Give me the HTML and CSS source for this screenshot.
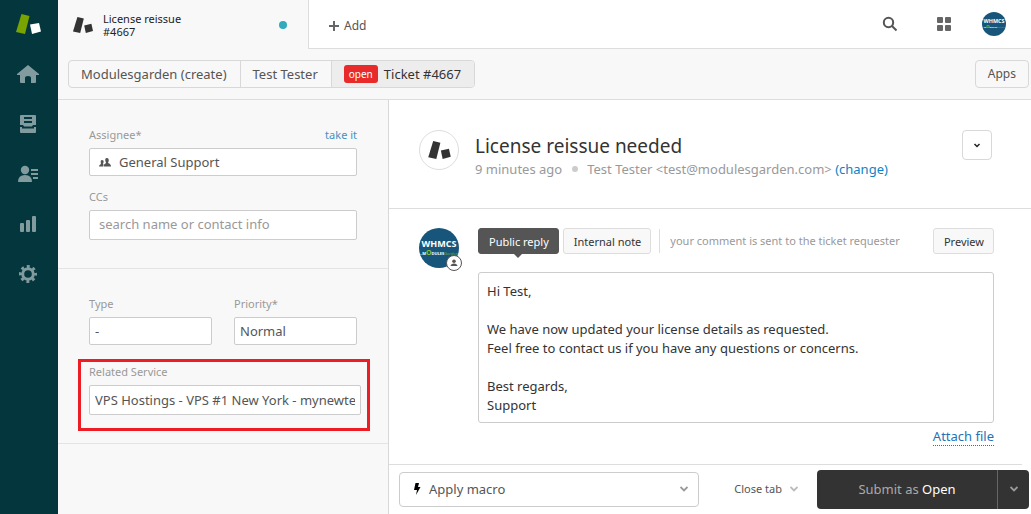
FILE: index.html
```html
<!DOCTYPE html>
<html lang="en">
<head>
<meta charset="utf-8">
<title>License reissue #4667</title>
<link rel="stylesheet" href="styles.css">
</head>
<body>
<div class="app">
  <nav class="rail" aria-label="Main">
    <a class="brand" href="#" aria-label="Dashboard"><svg width="25" height="20" viewBox="0 0 25 20"><path d="M5.500 0 13.500 2 9 20 0 18z" fill="#78a300"/><path d="M14 10.500 23 9 25 17.500 16 20z" fill="#fff"/></svg></a>
    <a href="#" aria-label="Home"><svg width="22" height="20" viewBox="0 0 22 20"><path d="M11 1 22 10V11H19V18Q19 19 18 19H14V14Q14 12 11 12T8 14V19H4Q3 19 3 18V11H0V10z"/></svg></a>
    <a href="#" aria-label="Views"><svg width="18" height="20" viewBox="0 0 18 20"><path fill-rule="evenodd" d="M2 1H16Q17 1 17 2V11H14L13 12.500H5L4 11H1V2Q1 1 2 1zM5 3V5H13V3zM5 7V9H13V7zM1 13H3V14.500H15V13H17V18Q17 19 16 19H2Q1 19 1 18z"/></svg></a>
    <a href="#" aria-label="Customers"><svg width="20" height="18" viewBox="0 0 20 18"><circle cx="7" cy="5" r="4.200"/><path d="M0 17Q0 10 7 10T14 17zM13 4H20V6H13zM13 8H20V10H13zM15 12H20V14H15z"/></svg></a>
    <a href="#" aria-label="Reporting"><svg width="18" height="18" viewBox="0 0 18 18"><rect x="1" y="8" width="4" height="9" rx="1"/><rect x="7" y="5" width="4" height="12" rx="1"/><rect x="13" y="1" width="4" height="16" rx="1"/></svg></a>
    <a href="#" aria-label="Settings"><svg width="20" height="20" viewBox="0 0 20 20"><circle cx="10" cy="10" r="5.300" fill="none" stroke="#819b9f" stroke-width="3"/><circle cx="10" cy="10" r="7.500" fill="none" stroke="#819b9f" stroke-width="3" stroke-dasharray="2.890 3" stroke-dashoffset="1.400"/></svg></a>
  </nav>
  <div class="workspace">
    <header class="topbar">
      <a class="tab" href="#">
        <svg width="20" height="16" viewBox="0 0 25 20" fill="#333"><path d="M5.500 0 13.500 2 9 20 0 18z"/><path d="M14 10.500 23 8.500 25 17.500 16 20z"/></svg>
        <span class="tab-text">License reissue<small>#4667</small></span>
        <span class="dot"></span>
      </a>
      <div class="tools">
        <button class="add" type="button"><svg width="10" height="10" viewBox="0 0 10 10"><path d="M4 0H6V4H10V6H6V10H4V6H0V4H4z" fill="#666"/></svg>Add</button>
        <div class="tool-icons">
          <button type="button" aria-label="Search"><svg width="16" height="16" viewBox="0 0 16 16" fill="none" stroke="#555" stroke-width="2"><circle cx="6.500" cy="6.500" r="4.700"/><path d="m10 10 4.500 4.500"/></svg></button>
          <button type="button" aria-label="Products"><svg width="16" height="16" viewBox="0 0 16 16" fill="#666"><rect x="1" y="1" width="6" height="6" rx="1"/><rect x="9" y="1" width="6" height="6" rx="1"/><rect x="1" y="9" width="6" height="6" rx="1"/><rect x="9" y="9" width="6" height="6" rx="1"/></svg></button>
          <button type="button" aria-label="Profile"><svg width="24" height="24" viewBox="0 0 40 40">
            <circle cx="20" cy="20" r="20" fill="#17567a"/>
            <text x="20" y="19" class="logo-main">WHMCS</text>
            <text x="20" y="27" class="logo-sub">..M<tspan class="lime">O</tspan>DULES<tspan class="logo-green">Garden</tspan></text>
          </svg></button>
        </div>
      </div>
    </header>
    <div class="crumbbar">
      <div class="crumbs">
        <a href="#">Modulesgarden (create)</a>
        <a href="#">Test Tester</a>
        <a class="current" href="#"><span class="status">open</span>Ticket #4667</a>
      </div>
      <button class="apps" type="button">Apps</button>
    </div>
    <div class="content">
      <aside class="fields">
        <section class="people">
          <div class="label-row"><label for="assignee">Assignee*</label><a href="#">take it</a></div>
          <div class="assignee">
            <svg width="12" height="9" viewBox="0 0 12 9" fill="#555"><path d="M8 0Q10 0 9.700 3L9 5Q12 6 12 8.500H4.500Q4.500 6 7 5 5 0 8 0zM3 2Q5 2 4.700 4L4 5.500Q5 6 4 8.500H0Q0 6.500 2 6 1 2 3 2z"/></svg>
            <select id="assignee"><option>General Support</option></select>
          </div>
          <label for="ccs">CCs</label>
          <input class="box ccs" id="ccs" placeholder="search name or contact info">
        </section>
        <section class="props">
          <div class="pair">
            <div><label for="type">Type</label><select class="box" id="type"><option>-</option></select></div>
            <div><label for="priority">Priority*</label><select class="box" id="priority"><option>Normal</option></select></div>
          </div>
          <div class="related">
            <label for="service">Related Service</label>
            <input class="box" id="service" value="VPS Hostings - VPS #1 New York - mynewtestdomain.com">
          </div>
        </section>
      </aside>
      <main class="ticket">
        <div class="ticket-head">
          <span class="requester"><svg width="23" height="18" viewBox="0 0 25 20" fill="#333"><path d="M5.500 0 13.500 2 9 20 0 18z"/><path d="M14 10.500 23 8.500 25 17.500 16 20z"/></svg></span>
          <div class="ticket-title">
            <h1>License reissue needed</h1>
            <p><span>9 minutes ago</span><i class="sep"></i><span>Test Tester &lt;test@modulesgarden.com&gt; <a href="#">(change)</a></span></p>
          </div>
          <button class="more" type="button" aria-label="Ticket options"><svg width="8" height="6" viewBox="0 0 8 6"><path d="M1.500 2 4 4.500 6.500 2" fill="none" stroke="#222" stroke-width="1.500"/></svg></button>
        </div>
        <form class="composer">
          <span class="agent"><svg width="40" height="40" viewBox="0 0 40 40">
              <circle cx="20" cy="20" r="20" fill="#17567a"/>
              <text x="20" y="19" class="logo-main">WHMCS</text>
              <text x="20" y="27" class="logo-sub">..M<tspan class="lime">O</tspan>DULES<tspan class="logo-green">Garden</tspan></text>
            </svg>
            <span class="badge"><svg width="8" height="8" viewBox="0 0 8 8" fill="#555"><circle cx="4" cy="2.200" r="1.800"/><path d="M.500 7Q1 4.500 4 4.500T7.500 7z"/></svg></span></span>
          <div class="reply">
            <div class="reply-bar">
              <button class="small active" type="button">Public reply</button>
              <button class="small" type="button">Internal note</button>
              <span class="hint">your comment is sent to the ticket requester</span>
              <button class="small preview" type="button">Preview</button>
            </div>
            <textarea aria-label="Comment" rows="7">Hi Test,

We have now updated your license details as requested.
Feel free to contact us if you have any questions or concerns.

Best regards,
Support</textarea>
            <a class="attach" href="#">Attach file</a>
          </div>
        </form>
        <footer class="actions">
          <button class="macro" type="button"><svg width="8" height="12" viewBox="0 0 8 12"><path d="M2.500 0H6L5 4H7.500L3 12 4 7H1z"/></svg><span>Apply macro</span><svg width="8" height="6" viewBox="0 0 8 6"><path d="M.500 1 4 4.500 7.500 1" fill="none" stroke="#999" stroke-width="1.800"/></svg></button>
          <button class="close" type="button">Close tab<svg width="8" height="6" viewBox="0 0 8 6"><path d="M.500 1 4 4.500 7.500 1" fill="none" stroke="#bbb" stroke-width="1.800"/></svg></button>
          <div class="submit">
            <button type="button">Submit as <b>Open</b></button>
            <button class="submit-more" type="button" aria-label="Submit options"><svg width="8" height="6" viewBox="0 0 8 6"><path d="M.500 1 4 4.500 7.500 1" fill="none" stroke="#999" stroke-width="1.800"/></svg></button>
          </div>
        </footer>
      </main>
    </div>
  </div>
</div>
</body>
</html>
```
FILE: styles.css
```css
* { box-sizing: border-box; }
body { margin: 0; background: #fff; color: #333; font: 13px/18px "Noto Sans", "Open Sans", sans-serif; }
a { color: inherit; text-decoration: none; }
button, input, select, textarea { font: inherit; color: inherit; }
button { background: none; border: 0; padding: 0; cursor: pointer; }
svg { display: block; flex: none; }
.app { display: flex; min-height: 100vh; }

.rail { flex: none; width: 58px; background: #03363d; fill: #819b9f; }
.rail a { display: grid; place-items: center; height: 50px; padding-right: 2px; }
.rail .brand { height: 49px; padding: 0 2px 2px 0; }
.logo-main { fill: #fff; font: bold 9px "Open Sans", sans-serif; text-anchor: middle; }
.logo-sub { fill: #fff; font: bold 4px "Open Sans", sans-serif; text-anchor: middle; }
.lime { fill: #7fc62c; font-size: 7px; }
.logo-green { fill: #6bb52f; font-weight: 400; }

.workspace { flex: 1; min-width: 0; display: flex; flex-direction: column; }
.topbar { display: flex; height: 49px; }
.tab { display: flex; align-items: center; width: 250px; padding: 0 21px 0 15px; background: #f8f8f8; }
.tab-text { flex: 1; margin-left: 10px; font-size: 11px; line-height: 13px; color: #222; }
.tab-text small { display: block; font-size: 11px; }
.dot { width: 8px; height: 8px; border-radius: 50%; background: #30aabc; }
.tools { flex: 1; display: flex; justify-content: space-between; align-items: center; padding: 0 25px 0 20px; border: solid #ddd; border-width: 0 0 1px 1px; }
.add { display: flex; align-items: center; gap: 5px; padding-top: 3px; font-size: 12px; color: #555; }
.tool-icons { display: flex; align-items: center; gap: 38px; }
.tool-icons button + button + button { margin-left: -8px; }

.crumbbar { display: flex; justify-content: space-between; align-items: center; height: 51px; padding: 0 2px 0 10px; background: #f8f8f8; border-bottom: 1px solid #ddd; color: #555; }
.crumbs { display: flex; height: 28px; border: 1px solid #d8d8d8; border-radius: 4px; overflow: hidden; }
.crumbs a { display: flex; align-items: center; padding: 0 13px 0 12px; }
.crumbs a + a { border-left: 1px solid #d8d8d8; }
.crumbs .current { gap: 6px; background: #ededed; color: #333; }
.status { padding: 0 5px; border-radius: 3px; background: #e82a2a; color: #fff; font-size: 10px; }
.apps { height: 28px; padding: 0 12px; border: 1px solid #d8d8d8; border-radius: 4px; font-size: 12px; }

.content { flex: 1; display: flex; }
.fields { flex: none; width: 331px; background: #f8f8f8; border-right: 1px solid #d8d8d8; color: #999; font-size: 11px; }
.fields section { padding: 26px 31px 28px; border-bottom: 1px solid #e4e4e4; }
.label-row { display: flex; justify-content: space-between; }
.label-row a { color: #4a90bd; }
label { display: block; margin-bottom: 4px; }
.assignee, .box { height: 28px; border: 1px solid #ccc; border-radius: 2px; background: #fff; color: #555; font-size: 13px; }
.box { display: block; width: 100%; padding: 0 5px; appearance: none; }
.assignee { display: flex; align-items: center; gap: 8px; padding-left: 9px; margin-bottom: 12px; }
.assignee select { flex: 1; border: 0; padding: 0; background: none; appearance: none; }
.ccs { height: 30px; padding: 0 9px 2px; }
::placeholder { color: #999; opacity: 1; }
.fields .props { padding: 26px 18px 12px 20px; }
.pair { display: grid; grid-template-columns: 1fr 1fr; gap: 22px; padding: 0 13px 0 11px; margin-bottom: 14px; }
.related { padding: 1px 6px 13px 8px; border: 3px solid #ee1c25; }
.related .box { height: 30px; }

.ticket { flex: 1; min-width: 0; display: flex; flex-direction: column; }
.ticket-head { display: flex; align-items: flex-start; height: 109px; padding: 30px 39px 0 30px; border-bottom: 1px solid #ddd; }
.requester { display: grid; place-items: center; width: 40px; height: 40px; border: 1px solid #ddd; border-radius: 50%; }
.ticket-title { flex: 1; margin-left: 16px; }
h1 { margin: 2px 0 0; font-size: 19px; line-height: 28px; font-weight: 400; }
.ticket-title p { display: flex; align-items: center; margin: 0; color: #999; }
.sep { width: 6px; height: 6px; margin: 0 9px 0 10px; border-radius: 50%; background: #ccc; }
.ticket-title a { color: #0a84c6; }
.more { display: grid; place-items: center; width: 30px; height: 30px; border: 1px solid #d8d8d8; border-radius: 4px; }

.composer { flex: 1; display: flex; align-items: flex-start; gap: 19px; padding: 19px 37px 0 30px; }
.agent { position: relative; flex: none; }
.badge { position: absolute; right: -3px; bottom: -3px; display: grid; place-items: center; width: 16px; height: 16px; border: 1px solid #555; border-radius: 50%; background: #fff; }
.reply { flex: 1; display: flex; flex-direction: column; }
.reply-bar { display: flex; align-items: center; gap: 4px; margin-bottom: 18px; font-size: 11px; }
.small { position: relative; height: 26px; padding: 1px 9px 0 10px; border: 1px solid #ddd; border-radius: 3px; background: #f8f8f8; }
.active { border-color: #555; background: #555; color: #fff; }
.active::after { content: ""; position: absolute; left: 50%; top: 100%; margin-left: -5px; border: 5px solid transparent; border-top-color: #555; border-bottom: 0; }
.hint { margin-left: 4px; padding: 3px 0 3px 10px; border-left: 1px solid #ddd; color: #999; }
.preview { margin-left: auto; }
textarea { display: block; width: 100%; padding: 9px 8px 7px; border: 1px solid #ccc; border-radius: 3px; line-height: 19px; resize: none; }
.attach { align-self: flex-end; margin-top: 4px; border-bottom: 1px dotted #1f73b7; color: #1f73b7; }

.actions { display: flex; align-items: center; height: 50px; padding: 0 2px 0 10px; background: linear-gradient(#ddd, #ddd) no-repeat 0 0 / calc(100% - 9px) 1px; }
.macro { flex: 0 1 300px; display: flex; align-items: center; gap: 8px; height: 35px; padding: 0 10px 0 13px; border: 1px solid #ccc; border-radius: 4px; color: #555; }
.macro span { flex: 1; text-align: left; }
.close { display: flex; align-items: center; gap: 8px; margin: 0 19px 0 auto; font-size: 11px; color: #555; }
.submit { display: flex; height: 39px; border-radius: 4px; background: #333; color: #aaa; overflow: hidden; }
.submit button { width: 180px; }
.submit b { font-weight: 400; color: #fff; }
.submit .submit-more { display: grid; place-items: center; width: 32px; border-left: 1px solid #666; }
```
